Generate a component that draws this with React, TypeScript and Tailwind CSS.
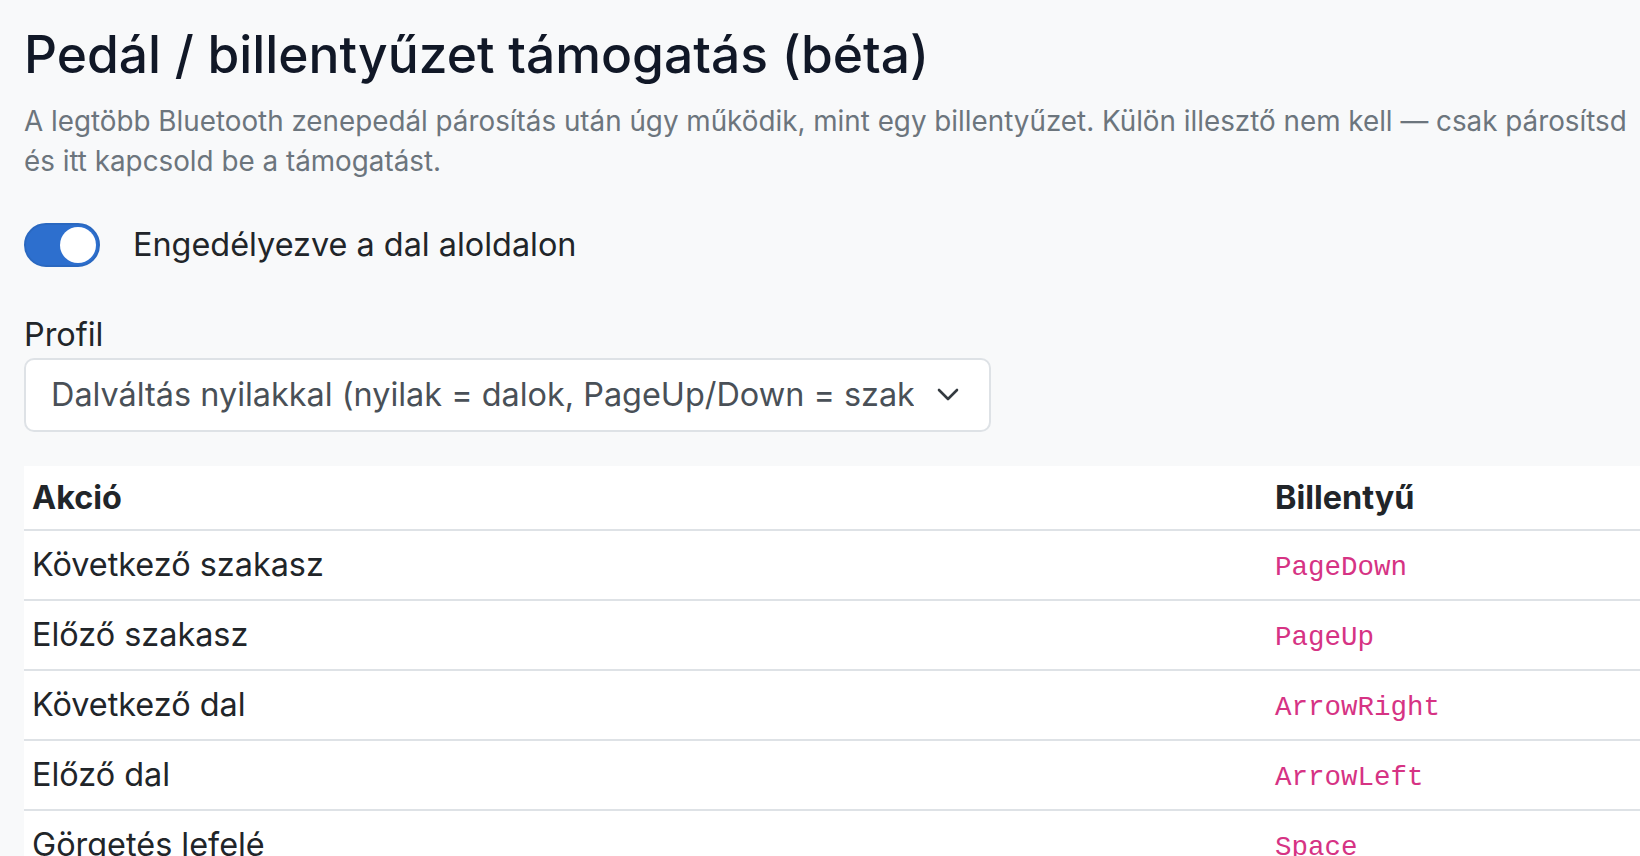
import { useState } from "react";

const rows = [
  { action: "Következő szakasz", key: "PageDown" },
  { action: "Előző szakasz", key: "PageUp" },
  { action: "Következő dal", key: "ArrowRight" },
  { action: "Előző dal", key: "ArrowLeft" },
  { action: "Görgetés lefelé", key: "Space" },
  { action: "Görgetés felfelé", key: "Shift+Space" },
];

export default function App() {
  const [enabled, setEnabled] = useState(true);

  return (
    <main className="h-[856px] overflow-hidden bg-[#f8f9fa] font-['Inter',sans-serif] text-[#212529]">
      <div className="pl-[24px] pt-[24px]">
        <h1 className="text-[51.5px] leading-[1.2] font-medium text-[#111827] whitespace-nowrap">
          Pedál / billentyűzet támogatás (béta)
        </h1>
        <p className="mt-[15px] text-[27.8px] leading-[40px] text-[#6c757d] whitespace-nowrap">
          A legtöbb Bluetooth zenepedál párosítás után úgy működik, mint egy billentyűzet. Külön illesztő nem kell — csak párosítsd
          <br />
          és itt kapcsold be a támogatást.
        </p>

        <div className="mt-[42px] flex items-center gap-[33px]">
          <button
            onClick={() => setEnabled(!enabled)}
            className={`flex h-[44px] w-[76px] items-center rounded-full border-2 p-[2px] ${
              enabled ? "justify-end border-[#2a68c0] bg-[#2d6fce]" : "justify-start border-[#ced4da] bg-white"
            }`}
          >
            <span className={`h-[36px] w-[36px] rounded-full ${enabled ? "bg-white" : "bg-[#ced4da]"}`} />
          </button>
          <span className="text-[32.4px] leading-[42px]">Engedélyezve a dal aloldalon</span>
        </div>

        <div className="mt-[47px] text-[32.4px] leading-[42px]">Profil</div>
        <div className="mt-[2px] flex h-[74px] w-[967px] items-center rounded-[10px] border-2 border-[#dee2e6] bg-white pl-[25px] pr-[30px]">
          <div className="w-[863px] shrink-0 overflow-hidden whitespace-nowrap text-[32.4px] leading-[42px] text-[#495057]">
            Dalváltás nyilakkal (nyilak = dalok, PageUp/Down = szakaszok)
          </div>
          <svg className="ml-auto h-[14px] w-[22px] shrink-0" viewBox="0 0 22 14" fill="none">
            <path d="M2 2l9 9 9-9" stroke="#343a40" strokeWidth="2.6" strokeLinecap="round" strokeLinejoin="round" />
          </svg>
        </div>

        <div className="mt-[34px] w-[1700px] bg-white">
          <div className="grid grid-cols-[1242px_1fr] border-b-2 border-[#dee2e6]">
            <div className="px-[8px] pt-[11px] pb-[10px] text-[32.4px] leading-[42px] font-bold">Akció</div>
            <div className="px-[9px] pt-[11px] pb-[10px] text-[32.4px] leading-[42px] font-bold">Billentyű</div>
          </div>
          {rows.map((r) => (
            <div key={r.action} className="grid grid-cols-[1242px_1fr] border-b-2 border-[#dee2e6]">
              <div className="px-[8px] py-[13px] text-[32.4px] leading-[42px]">{r.action}</div>
              <div className="flex items-center px-[9px] pt-[16px] pb-[10px]">
                <code className="font-['Liberation_Mono',monospace] text-[27.5px] leading-[42px] text-[#d63384]">{r.key}</code>
              </div>
            </div>
          ))}
        </div>
      </div>
    </main>
  );
}
